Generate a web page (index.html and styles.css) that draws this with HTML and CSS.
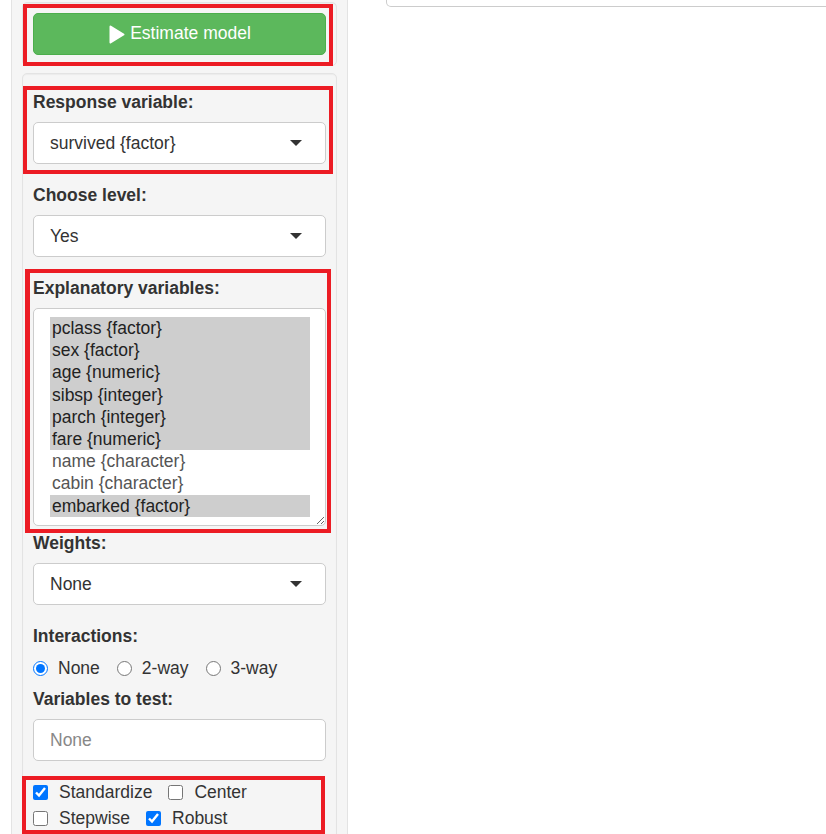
FILE: index.html
```html
<!DOCTYPE html>
<html lang="en">
<head>
<meta charset="utf-8">
<title>Estimate model</title>
<link rel="stylesheet" href="styles.css">
</head>
<body>
<div class="layout">
  <aside class="sidebar">
    <div class="well well-run mark mark-run">
      <button class="btn-run" type="button">
        <svg class="play" width="17" height="19" viewBox="0 0 17 19"><path d="M2.5 1.5 L15.5 9.5 L2.5 17.5 Z" fill="#fff" stroke="#fff" stroke-width="2" stroke-linejoin="round"/></svg>
        <span>Estimate model</span>
      </button>
    </div>
    <div class="well well-form">
      <div class="group mark mark-resp">
        <div class="label">Response variable:</div>
        <div class="select"><span>survived {factor}</span><span class="caret"></span></div>
      </div>
      <div class="group">
        <div class="label">Choose level:</div>
        <div class="select"><span>Yes</span><span class="caret"></span></div>
      </div>
      <div class="group group-tight mark mark-expl">
        <div class="label">Explanatory variables:</div>
        <div class="multi">
          <div class="opt sel">pclass {factor}</div>
          <div class="opt sel">sex {factor}</div>
          <div class="opt sel">age {numeric}</div>
          <div class="opt sel">sibsp {integer}</div>
          <div class="opt sel">parch {integer}</div>
          <div class="opt sel">fare {numeric}</div>
          <div class="opt">name {character}</div>
          <div class="opt">cabin {character}</div>
          <div class="opt sel">embarked {factor}</div>
        </div>
      </div>
      <div class="group">
        <div class="label">Weights:</div>
        <div class="select"><span>None</span><span class="caret"></span></div>
      </div>
      <div class="group group-radio">
        <div class="label">Interactions:</div>
        <div class="radios">
          <label class="choice"><input type="radio" name="int" checked><span>None</span></label>
          <label class="choice"><input type="radio" name="int"><span>2-way</span></label>
          <label class="choice"><input type="radio" name="int"><span>3-way</span></label>
        </div>
      </div>
      <div class="group">
        <div class="label">Variables to test:</div>
        <div class="textbox">None</div>
      </div>
      <div class="checks mark mark-checks">
        <div class="check-row">
          <label class="choice"><input type="checkbox" checked><span>Standardize</span></label>
          <label class="choice"><input type="checkbox"><span>Center</span></label>
        </div>
        <div class="check-row">
          <label class="choice"><input type="checkbox"><span>Stepwise</span></label>
          <label class="choice"><input type="checkbox" checked><span>Robust</span></label>
        </div>
      </div>
    </div>
  </aside>
  <main class="main">
    <div class="tabbox"></div>
  </main>
</div>
</body>
</html>
```

FILE: styles.css
```css
* { box-sizing: border-box; }
html, body { margin: 0; padding: 0; background: #fff; }
body {
  font-family: "Liberation Sans", Arial, sans-serif;
  font-size: 17.5px;
  line-height: 25px;
  color: #333;
}
.layout {
  display: flex;
  align-items: stretch;
  height: 834px;
  overflow: hidden;
}
.sidebar {
  margin-left: 11px;
  width: 337px;
  background: #f5f5f5;
  border-left: 1px solid #e3e3e3;
  border-right: 1px solid #e3e3e3;
  padding: 2px 10px 0;
  flex: none;
}
.well {
  background: #f5f5f5;
  border: 1px solid #e3e3e3;
  border-radius: 5px;
  box-shadow: inset 0 1px 1px rgba(0,0,0,0.04);
}
.well-run { padding: 10px; }
.well-form { margin-top: 7px; padding: 16px 10px 20px; }

.mark { position: relative; }
.mark::after {
  content: "";
  position: absolute;
  border: 4px solid #ec1c24;
  pointer-events: none;
}
.mark-run::after { top: 1px; left: 0; right: 3px; bottom: -1px; }
.mark-resp::after { top: -4px; left: -10px; right: -7px; bottom: -10px; }
.mark-expl::after { top: -7px; left: -8px; right: -5px; bottom: -7px; border-width: 4px 4px 4px 5px; }
.mark-checks::after { top: -4px; left: -11px; right: 1px; bottom: -3px; }

.btn-run {
  width: 100%;
  height: 42px;
  background: #5cb85c;
  border: 1px solid #4cae4c;
  border-radius: 5px;
  color: #fff;
  font: inherit;
  font-size: 17.5px;
  display: flex;
  align-items: center;
  justify-content: center;
  gap: 5px;
  padding: 0 0 1px;
}
.play { display: block; flex: none; margin-top: 1px; }

.group { margin-bottom: 19px; }
.group-tight { margin-bottom: 5px; }
.group-radio { margin-bottom: 6px; }
.label {
  font-weight: bold;
  line-height: 25px;
  margin-bottom: 7px;
}
.select {
  height: 42px;
  background: #fff;
  border: 1px solid #ccc;
  border-radius: 5px;
  display: flex;
  align-items: center;
  justify-content: space-between;
  padding: 0 23px 0 16px;
  color: #333;
}
.caret {
  width: 0;
  height: 0;
  border-left: 6px solid transparent;
  border-right: 6px solid transparent;
  border-top: 6px solid #333;
}
.multi {
  height: 218px;
  background: #fff;
  border: 1px solid #ccc;
  border-radius: 5px;
  padding: 8px 15px 8px 16px;
  overflow: hidden;
  resize: vertical;
}
.opt {
  height: 22.2px;
  line-height: 22.2px;
  padding-left: 2px;
  color: #555;
  white-space: nowrap;
}
.opt.sel { background: #cecece; color: #222; }

.radios { display: flex; height: 25px; align-items: center; }
.choice {
  display: inline-flex;
  align-items: center;
  margin-right: 17px;
  line-height: 25px;
  cursor: pointer;
}
.choice input {
  width: 15px;
  height: 15px;
  margin: 0 11px 0 0;
  flex: none;
}
.radios .choice input { margin-right: 10px; }
.check-row .choice { margin-right: 16px; }
.textbox {
  height: 42px;
  background: #fff;
  border: 1px solid #ccc;
  border-radius: 5px;
  padding: 0 16px;
  display: flex;
  align-items: center;
  color: #888;
}
.check-row { display: flex; height: 25.7px; align-items: center; }

.main { flex: 1; padding-left: 38px; }
.tabbox {
  height: 7px;
  margin-right: -10px;
  border: 1px solid #ccc;
  border-top: none;
  border-radius: 0 0 5px 5px;
}
```
